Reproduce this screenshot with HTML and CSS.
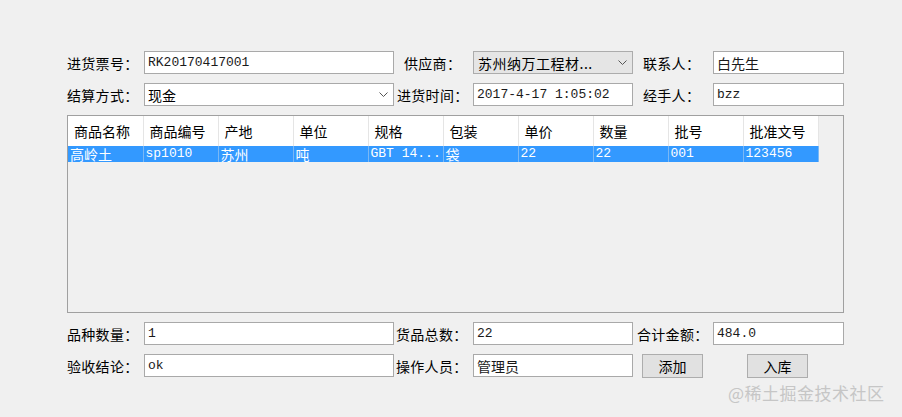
FILE: index.html
```html
<!DOCTYPE html>
<html lang="zh-CN">
<head>
    <meta charset="UTF-8">
    <title>入库单</title>
    <link rel="stylesheet" href="styles.css">
</head>
<body>
    <div class="form">
        <!-- row 1 -->
        <label class="lbl">进货票号：</label>
        <input class="field" type="text" value="RK20170417001">
        <label class="lbl lbl-b1">供应商：</label>
        <div class="combo combo-grey">
            <span>苏州纳万工程材...</span>
            <svg class="chev" width="9" height="6" viewBox="0 0 9 6"><path d="M0.5 0.5 L4.5 4.5 L8.5 0.5" fill="none" stroke="#555" stroke-width="1"/></svg>
        </div>
        <label class="lbl lbl-c1">联系人：</label>
        <input class="field field-cjk" type="text" value="白先生">

        <!-- row 2 -->
        <label class="lbl">结算方式：</label>
        <div class="combo">
            <span>现金</span>
            <svg class="chev" width="9" height="6" viewBox="0 0 9 6"><path d="M0.5 0.5 L4.5 4.5 L8.5 0.5" fill="none" stroke="#555" stroke-width="1"/></svg>
        </div>
        <label class="lbl lbl-b2">进货时间：</label>
        <input class="field" type="text" value="2017-4-17 1:05:02">
        <label class="lbl lbl-c1">经手人：</label>
        <input class="field" type="text" value="bzz">

        <!-- goods list -->
        <div class="grid-box">
            <table class="goods">
                <thead>
                    <tr>
                        <th>商品名称</th><th>商品编号</th><th>产地</th><th>单位</th><th>规格</th>
                        <th>包装</th><th>单价</th><th>数量</th><th>批号</th><th>批准文号</th>
                    </tr>
                </thead>
                <tbody>
                    <tr class="selected">
                        <td class="cjk">高岭土</td><td>sp1010</td><td class="cjk">苏州</td><td class="cjk">吨</td><td>GBT 14...</td>
                        <td class="cjk">袋</td><td>22</td><td>22</td><td>001</td><td>123456</td>
                    </tr>
                </tbody>
            </table>
        </div>

        <!-- row 3 -->
        <label class="lbl">品种数量：</label>
        <input class="field" type="text" value="1">
        <label class="lbl lbl-b3">货品总数：</label>
        <input class="field" type="text" value="22">
        <label class="lbl lbl-c3">合计金额：</label>
        <input class="field" type="text" value="484.0">

        <!-- row 4 -->
        <label class="lbl">验收结论：</label>
        <input class="field" type="text" value="ok">
        <label class="lbl lbl-b3">操作人员：</label>
        <input class="field field-cjk" type="text" value="管理员">
        <div class="actions">
            <button class="btn">添加</button>
            <button class="btn btn-store">入库</button>
        </div>
    </div>

    <div class="watermark">@稀土掘金技术社区</div>
</body>
</html>
```

FILE: styles.css
```css
body {
    margin: 0;
    width: 902px;
    height: 417px;
    background-color: #f0f0f0;
    font-family: "Noto Sans CJK SC", "Microsoft YaHei", sans-serif;
    font-size: 14px;
    color: #000;
    overflow: hidden;
    position: relative;
}

.form {
    display: grid;
    grid-template-columns: 77px 250px 79px 160px 80px 131px;
    grid-template-rows: 23px 23px 198px 23px 24px;
    row-gap: 9px;
    padding: 51px 0 0 67px;
}

.lbl {
    display: flex;
    align-items: center;
    white-space: nowrap;
    font-size: 14px;
    line-height: 1;
    letter-spacing: 0.3px;
}

.lbl-b1 { padding-left: 10px; }
.lbl-b2 { padding-left: 3px; }
.lbl-b3 { padding-left: 2px; }
.lbl-c1 { padding-left: 10px; }
.lbl-c3 { padding-left: 4px; }

.field {
    box-sizing: border-box;
    width: 100%;
    height: 23px;
    margin: 0;
    padding: 0 3px;
    border: 1px solid #a9a9a9;
    background: #fff;
    font-family: "Liberation Mono", "Noto Sans CJK SC", monospace;
    font-size: 13px;
    color: #1a1a1a;
    outline: none;
}

.field-cjk {
    font-family: "Noto Sans CJK SC", sans-serif;
    font-size: 14px;
}

.combo {
    box-sizing: border-box;
    height: 23px;
    display: flex;
    align-items: center;
    justify-content: space-between;
    padding: 0 5px 0 3px;
    border: 1px solid #a9a9a9;
    background: #fff;
    font-size: 14px;
}

.combo-grey {
    background: #e5e5e5;
    border-color: #acacac;
    padding-left: 4px;
    letter-spacing: 0.5px;
}

.chev {
    flex: none;
}

.grid-box {
    grid-column: 1 / -1;
    box-sizing: border-box;
    border: 1px solid #a0a0a0;
    background: #f0f0f0;
    overflow: hidden;
}

.goods {
    border-collapse: collapse;
    table-layout: fixed;
    width: 750px;
}

.goods th {
    width: 75px;
    height: 30px;
    box-sizing: border-box;
    padding: 0 0 0 6px;
    background: #fff;
    border-right: 1px solid #e5e5e5;
    text-align: left;
    font-weight: normal;
    font-size: 14px;
}

.goods td {
    height: 16px;
    padding: 0 0 0 2px;
    border-right: 1px solid #7ab8f5;
    background: #3399ff;
    color: #fff;
    font-family: "Liberation Mono", monospace;
    font-size: 13px;
    line-height: 16px;
    white-space: nowrap;
    vertical-align: middle;
}

.goods td.cjk {
    font-family: "Noto Sans CJK SC", sans-serif;
    font-size: 14px;
}

.actions {
    grid-column: 5 / 7;
    display: flex;
    padding-left: 9px;
}

.btn {
    box-sizing: border-box;
    width: 61px;
    height: 24px;
    margin: 0;
    padding: 0;
    border: 1px solid #adadad;
    background: #e1e1e1;
    font-family: "Noto Sans CJK SC", sans-serif;
    font-size: 14px;
    color: #000;
}

.btn-store {
    margin-left: 44px;
}

.watermark {
    position: absolute;
    left: 728px;
    top: 380px;
    font-size: 17px;
    color: #c6c6c6;
    letter-spacing: 0.5px;
    white-space: nowrap;
}
```
